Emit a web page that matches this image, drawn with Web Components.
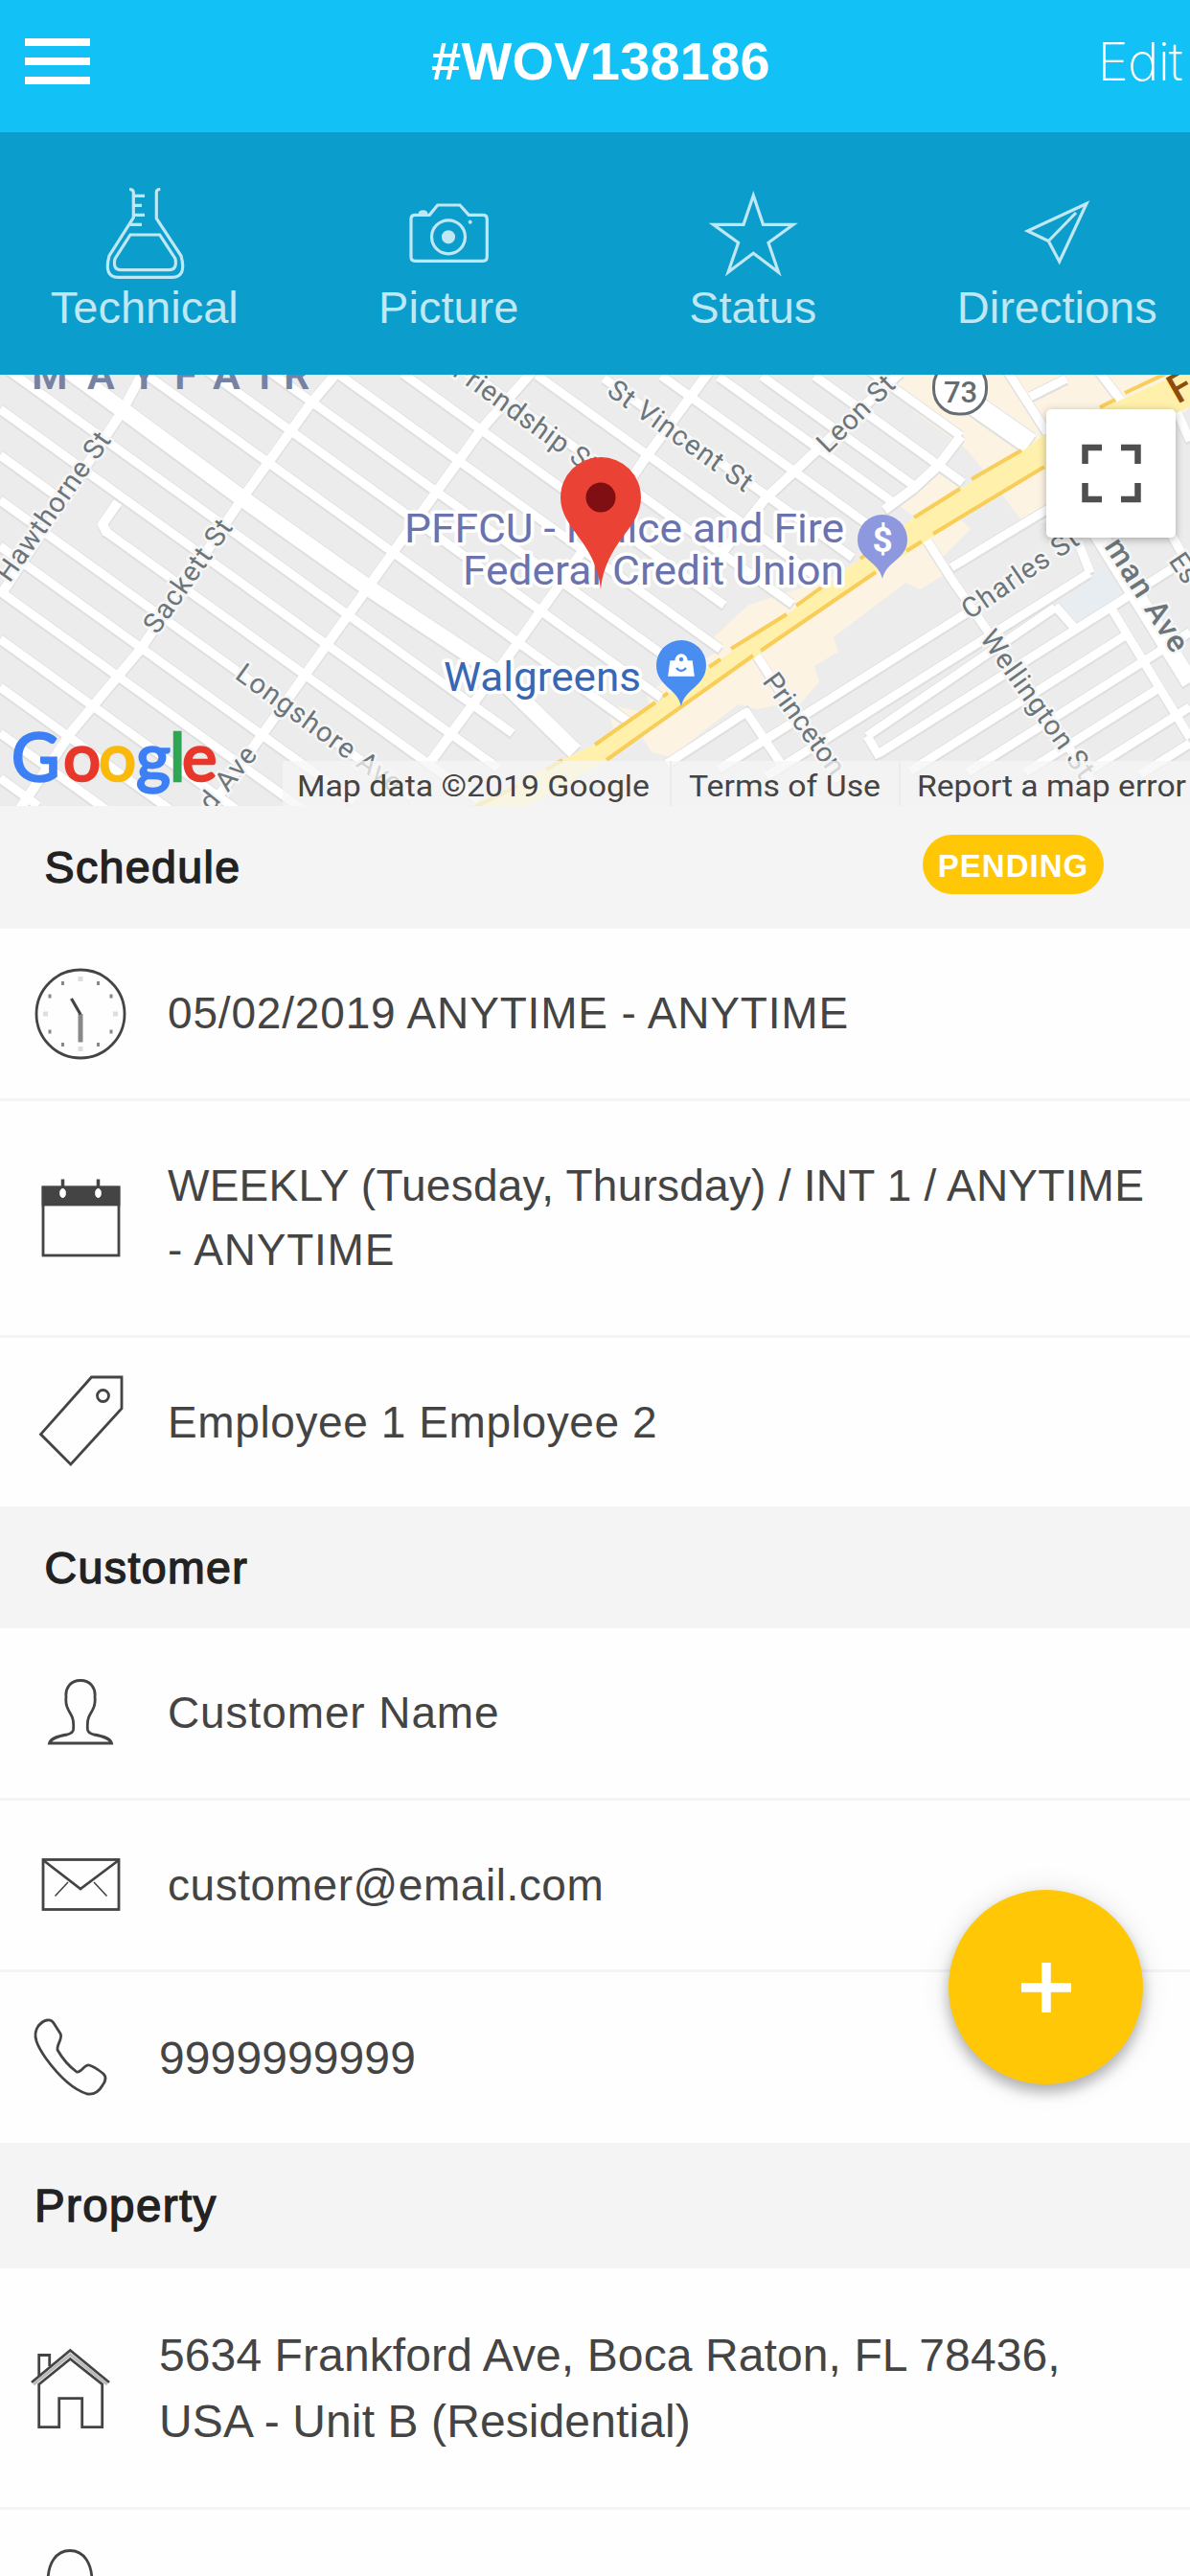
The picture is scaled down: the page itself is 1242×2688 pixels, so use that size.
<!DOCTYPE html>
<html lang="en">
<head>
<meta charset="utf-8">
<title>#WOV138186</title>
<style>
    html,
    body {
        margin: 0;
        padding: 0;
    }

    body {
        width: 1242px;
        height: 2688px;
        overflow: hidden;
        background: #fefefe;
        color: #444;
        font-family: 'Liberation Sans', Arial, sans-serif;
    }
</style>
</head>
<body>
<work-order-page></work-order-page>

<script>
const icons = {
    flask: `
        <path d="M39 7.500q4 0 4.300 3V37L18 77Q12 99 27 99.300H84Q99 99 93 77L67.300 38V10.500q0-3 4-3"/>
        <path d="M40 55H70.700L87 80Q89 91.700 80.700 91.700H30Q21.500 91.500 24 80Z"/>
        <path d="M43.300 14.300H55M43.300 24.300H52M43.300 34.300H55M40 44.300H52"/>`,
    camera: `
        <path d="M20.300 34.300H35.300L43.700 24H67L76.300 34.300H91q4.300 0 4.300 4.300V78q0 4.300-4.300 4.300H20.300Q16 82.300 16 78V38.600q0-4.300 4.300-4.300Z"/>
        <circle cx="55" cy="57.300" r="17.500"/>
        <circle cx="55" cy="57.300" r="5.500" fill="currentColor"/>
        <path d="M24.500 33q0-3 4-3t4 3Z" fill="currentColor" stroke-width="1.500"/>
        <circle cx="77.700" cy="41.700" r="1.600" fill="currentColor" stroke-width="1"/>`,
    star: `
        <path d="M55.300 14L65.500 44.300H97L71 63.300L81.500 94L55.300 74.300L29 94L39.600 63.300L13.500 44.300H45Z"/>`,
    plane: `
        <path d="M86 22.500L24.500 51L46.300 61.500L57.700 83ZM46.300 61.500L75 32"/>`,
    clock: `
        <circle cx="50" cy="50" r="46"/>
        <path d="M50 50V79.500" stroke="#888" stroke-width="5"/>
        <path d="M40.500 34L50 50.500" stroke-width="3.200"/>
        <path d="M50 11v5M50 84v5M11 50h5M84 50h5" stroke="#ddd" stroke-width="5"/>
        <path d="M31.500 16v4M68.500 16v4M31.500 80v4M68.500 80v4M18 29.500v4M82 29.500v4M18 66.500v4M82 66.500v4" stroke="#888" stroke-width="3"/>`,
    calendar: `
        <rect x="11" y="18" width="79" height="71"/>
        <rect x="11" y="18" width="79" height="18" fill="currentColor"/>
        <path d="M31.500 9.500V20M68.500 9.500V20" stroke-width="3.500"/>
        <ellipse cx="31.500" cy="24" rx="2.800" ry="4.500" fill="#fff" stroke="#fff" stroke-width="1"/>
        <ellipse cx="68.500" cy="24" rx="2.800" ry="4.500" fill="#fff" stroke="#fff" stroke-width="1"/>`,
    tag: `
        <path d="M61.500 3H93V35.800L39.800 94L8.500 62.600Z"/>
        <circle cx="73.500" cy="22.500" r="6"/>`,
    person: `
        <path d="M50 15.500C39 15.500 34 24 35 33C34 41 37 46 40 51C43 56 43 62 42.500 67C42 70 40 71 36 72C25 74 19 76 17.500 81H82.500C81 76 75 74 64 72C60 71 58 70 57.500 67C57 62 57 56 60 51C63 46 66 41 65 33C66 24 61 15.500 50 15.500Z"/>`,
    mail: `
        <rect x="11" y="23.500" width="79" height="52"/>
        <path d="M11 24L50 54L90 24"/>
        <path d="M37 47L23.500 61.500M64 47L77.500 61.500" stroke-width="1.600"/>`,
    phone: `
        <path d="M17 17C23 10 30 9 33 14L40 25C43 30 36 36 37 42C42 51 49 59 57 65C62 66 65 57 70 58C75 59 80 63 85 67C89 71 87 75 84 79C80 86 75 89 68 88C52 83 36 66 25 51C16 38 10 27 17 17Z"/>`,
    house: `
        <path d="M10 44L50.300 10.500L91 44"/>
        <path d="M17.700 46L50.300 19.500L83.700 46V90.700H62.700V60.700H38.700V90.700H17.700Z"/>
        <path d="M12 46L50.300 15L89 46" stroke="#bbb" stroke-width="3"/>
        <path d="M17.700 37V15.500H28.700V27"/>`,
    bulb: `
        <path d="M27 40C26 16 36 3.500 50 3.500S74 16 73 40"/>`
}

class LineIcon extends HTMLElement {
    constructor() {
        super()
        this.attachShadow({ mode: 'open' })
    }

    connectedCallback() {
        const size = this.getAttribute('size') || 100
        const weight = this.getAttribute('weight') || 2.8
        this.shadowRoot.innerHTML = /*html*/ `
        <style>
        :host {
            display: block;
            flex: none;
        }

        svg {
            display: block;
            fill: none;
            stroke: currentColor;
        }
        </style>
        <svg width="${size}" height="${size}" viewBox="0 0 ${size} ${size}" stroke-width="${weight}">${icons[this.getAttribute('name')]}</svg>
        `
    }
}

class PageHeader extends HTMLElement {
    constructor() {
        super()
        this.attachShadow({ mode: 'open' })
    }

    connectedCallback() {
        this.shadowRoot.innerHTML = /*html*/ `
        <style>
        :host {
            display: grid;
            grid-template-columns: 1fr auto 1fr;
            align-items: center;
            box-sizing: border-box;
            height: 138px;
            padding: 0 8px 10px 26px;
            background: #12c1f6;
            color: #fff;
        }

        .menu {
            display: grid;
            gap: 12px;
            width: 68px;
        }

        .menu i {
            height: 8px;
            background: #fff;
        }

        h1 {
            margin: 0 6px 0 0;
            font-size: 56px;
            line-height: 64px;
            font-weight: 700;
            letter-spacing: 0.200px;
        }

        .edit {
            justify-self: end;
            font: 200 55px/64px Inter, sans-serif;
            letter-spacing: -0.900px;
        }
        </style>
        <div class="menu"><i></i><i></i><i></i></div>
        <h1><slot></slot></h1>
        <span class="edit">Edit</span>
        `
    }
}

class ToolBar extends HTMLElement {
    constructor() {
        super()
        this.attachShadow({ mode: 'open' })
    }

    connectedCallback() {
        this.shadowRoot.innerHTML = /*html*/ `
        <style>
        :host {
            display: block;
            height: 253px;
            overflow: hidden;
            background: #0b9dcb;
        }

        div {
            display: grid;
            grid-template-columns: repeat(4, 317.500px);
            margin-left: -8px;
            padding-top: 52px;
        }
        </style>
        <div><slot></slot></div>
        `
    }
}

class ToolButton extends HTMLElement {
    constructor() {
        super()
        this.attachShadow({ mode: 'open' })
    }

    connectedCallback() {
        this.shadowRoot.innerHTML = /*html*/ `
        <style>
        :host {
            display: flex;
            flex-direction: column;
            align-items: center;
            color: #bfe7f4;
            font-size: 47px;
            line-height: 52px;
        }

        span {
            margin-top: -5px;
        }
        </style>
        <line-icon name="${this.getAttribute('icon')}" size="110" weight="3.200"></line-icon>
        <span><slot></slot></span>
        `
    }
}

class JobMap extends HTMLElement {
    constructor() {
        super()
        this.attachShadow({ mode: 'open' })
    }

    // streets running down to the right: [offset, from x, to x]
    crossStreets() {
        const slope = 0.72
        const list = [
            [-267, 905, 1003], [-220, 850, 1005], [-180, 795, 954], [-147, 750, 930],
            [-105, 690, 915], [-59, 630, 890], [-12, 560, 850], [35, 490, 827],
            [87, 420, 756], [136, 350, 752], [185, 280, 722], [231, 215, 690],
            [281, 150, 660], [380, 0, 535], [427, 0, 520], [475, 0, 66],
            [475, 109, 500], [522, 0, 430], [570, 0, 370], [617, 0, 320],
            [667, 0, 250], [717, 0, 180], [765, 0, 110], [812, 0, 40]
        ]
        return list
            .map(([c, a, b]) => `M${a} ${a * slope + c}L${b} ${b * slope + c}`)
            .join('')
    }

    // the blocks south of the avenue
    southStreets() {
        const list = [
            [1275, 750, 1012], [1314, 800, 1137], [1364, 917, 1242], [1403, 950, 1177],
            [1442, 1010, 1242], [1480, 1070, 1212], [1520, 1130, 1242], [1558, 1190, 1242]
        ]
        return list
            .map(([c, a, b]) => `M${a} ${c - a * 0.63}L${b} ${c - b * 0.63}`)
            .join('')
    }

    connectedCallback() {
        const roads = `
            <path d="${this.crossStreets()}" stroke-width="9"/>
            <path d="${this.southStreets()}" stroke-width="9"/>
            <path d="M151 385L127 430L0 622M355 385L325 420L253 520L147 677L75 763L20 845M558 385L503 447L384 613L269 773L218 845M742 385L672 480L582 613L539 673L450 794M940 388L799 520L735 600M1003 455L980 485L953 510L923 532M123 524L107 547L112 557" stroke-width="10"/>
            <path d="M967 563L993 604L1140 815M789 683L875 815M696 797L779 743L815 797M993 592L1094 531M1160 635L1242 770M1101 632L1123 657M905 768L1101 634M905 768L918 790M1050 385L1095 455M1145 385L1170 418M1075 414L1113 395M1222 415L1242 460M1212 540L1242 592M1125 565L1138 598" stroke-width="9"/>
            <path d="M60 378L131 430L253 520L384 613L511 697L600 784" stroke-width="17"/>
            <path d="M985 400L1075 463" stroke-width="22"/>
            <path d="M1145 555L1242 712" stroke-width="18"/>`

        this.shadowRoot.innerHTML = /*html*/ `
        <style>
        :host {
            display: block;
            position: relative;
            height: 450px;
            overflow: hidden;
        }

        svg {
            display: block;
        }

        text {
            font-family: Roboto, sans-serif;
        }

        .edge {
            fill: none;
            stroke: #dfdfdf;
        }

        .road {
            fill: none;
            stroke: #fff;
            stroke-linejoin: round;
        }

        .label {
            fill: #6c757a;
            font-size: 29px;
            stroke: #f6f6f6;
            stroke-width: 5px;
            paint-order: stroke;
        }

        .place {
            fill: #6b73ae;
            font-size: 42px;
            stroke: #fff;
            stroke-width: 7px;
            stroke-linejoin: round;
            paint-order: stroke;
        }

        .logo {
            font-family: Lato, sans-serif;
            font-size: 69px;
            stroke-width: 2.600px;
        }

        .halo {
            fill: #fff;
            stroke: #fff;
            stroke-width: 8px;
            stroke-linejoin: round;
        }

        .legal {
            fill: #444;
            font-size: 31px;
        }

        button {
            position: absolute;
            top: 36px;
            right: 15px;
            display: grid;
            place-items: center;
            width: 135px;
            height: 134px;
            padding: 0;
            border: 0;
            border-radius: 5px;
            background: #fff;
            box-shadow: 0 2px 9px rgba(0, 0, 0, 0.3);
        }
        </style>
        <svg width="1242" height="450" viewBox="0 391 1242 450">
            <rect y="391" width="1242" height="450" fill="#ececec"/>
            <g fill="#fcf3e3">
                <path d="M930 391H1242V425L1095 545H1068L1010 470L955 430Z"/>
                <path d="M980 492L1003 510L955 540L935 525Z"/>
                <path d="M995 535L1013 552L980 585L985 600L960 615L945 608L870 665L875 680L850 695L855 712L830 740L815 735L790 740L770 735L700 790L680 785L668 765L790 672L965 562Z"/>
                <path d="M800 625L780 632L745 665L750 680L700 705L675 725L680 745L633 735L640 760L800 660L880 600Z"/>
            </g>
            <path d="M1146 591L1180 622L1123 655L1105 632Z" fill="#e7edf0"/>
            <g class="edge" transform="translate(0 2.500)">${roads}</g>
            <g class="edge" transform="translate(0 -1)">${roads}</g>
            <g class="road">${roads}</g>

            <path d="M485 844L586 793L621 777L823 640L954 540L1068 470L1092 452L1242 385V425L1088 488L914 598L791 684L633 794L545 844Z" fill="#fff1ab"/>
            <g fill="none" stroke="#f8cd58" stroke-width="4">
                <path d="M570 803L587 793M621 777L684 733M692 727L697 723M740 696L752 688M763 677L821 641M831 632L860 611M898 583L902 580M954 540L1002 510M1014 500L1066 470M1148 425L1164 417M1174 410L1242 378"/>
                <path d="M490 845L540 820M633 793L786 684M794 679L914 597M946 575L962 565M974 557L1090 487"/>
            </g>

            <text y="406" font-size="43" font-weight="600" fill="#7582a4"><tspan x="33">M</tspan><tspan x="91">A</tspan><tspan x="137">Y</tspan><tspan x="182">F</tspan><tspan x="222">A</tspan><tspan x="270">I</tspan><tspan x="296">R</tspan></text>
            <text class="label" transform="translate(10 609) rotate(-54.500)" textLength="184">Hawthorne St</text>
            <text class="label" transform="translate(164 663) rotate(-54.700)" textLength="138">Sackett St</text>
            <text class="label" transform="translate(244 707) rotate(36)" textLength="206">Longshore Ave</text>
            <text class="label" transform="translate(221 848) rotate(-51)" textLength="77">d Ave</text>
            <text class="label" transform="translate(471 391) rotate(36)" textLength="178">Friendship St</text>
            <text class="label" transform="translate(632 411) rotate(35.500)" textLength="178">St Vincent St</text>
            <text class="label" transform="translate(864 474) rotate(-44.600)" textLength="101">Leon St</text>
            <text class="label" transform="translate(1012 647) rotate(-34.500)" textLength="141">Charles St</text>
            <text class="label" transform="translate(1022 666) rotate(54.500)" textLength="182">Wellington St</text>
            <text class="label" transform="translate(795 711) rotate(54)" textLength="124">Princeton</text>
            <text class="label" transform="translate(1152 570) rotate(57.500)" textLength="134" font-weight="500" style="font-size: 32px">man Ave</text>
            <text class="label" transform="translate(1219 585) rotate(56)">Es</text>
            <text transform="translate(1229 422) rotate(-30)" font-size="42" font-weight="500" fill="#8f4d0c">F</text>

            <rect x="974.500" y="377" width="55" height="55" rx="26" fill="#fff" stroke="#646d72" stroke-width="3"/>
            <text x="985" y="420" font-size="31" font-weight="500" textLength="35" fill="#646d72">73</text>

            <text class="place" x="422" y="566" textLength="459" lengthAdjust="spacingAndGlyphs">PFFCU - Police and Fire</text>
            <text class="place" x="483" y="610" textLength="398" lengthAdjust="spacingAndGlyphs">Federal Credit Union</text>
            <text class="place" x="463" y="721" textLength="206" lengthAdjust="spacingAndGlyphs" style="fill: #3767b5">Walgreens</text>

            <path d="M921 604C917 585 895 584 895 563A26 26 0 0 1 947 563C947 584 925 585 921 604Z" fill="#8e98df"/>
            <text x="921" y="576" text-anchor="middle" font-size="37" font-weight="700" fill="#fff">$</text>
            <path d="M711 737C707 718 685 716 685 694A26 26 0 0 1 737 694C737 716 715 718 711 737Z" fill="#4a8df0"/>
            <path d="M700 690H722L724 705H698ZM705 690A6 7 0 0 1 717 690" fill="#fff" stroke="#fff" stroke-width="1.500"/>
            <path d="M706 697Q711 703 716 697" fill="none" stroke="#4a8df0" stroke-width="2.500"/>
            <circle cx="711" cy="688" r="2.200" fill="#4a8df0"/>
            <path d="M627 615C622 565 585 552 585 519A42 42 0 0 1 669 519C669 552 632 565 627 615Z" fill="#ea4335"/>
            <circle cx="627" cy="519" r="15.500" fill="#7f0f12"/>

            <rect x="295" y="794" width="947" height="47" fill="#f5f5f5" fill-opacity="0.750"/>
            <path d="M700 794V841M939 794V841" stroke="#ececec" stroke-width="2"/>
            <text class="legal" x="310" y="831" textLength="368" lengthAdjust="spacingAndGlyphs">Map data ©2019 Google</text>
            <text class="legal" x="719" y="831" textLength="200" lengthAdjust="spacingAndGlyphs">Terms of Use</text>
            <text class="legal" x="957" y="831" textLength="281" lengthAdjust="spacingAndGlyphs">Report a map error</text>
            <text class="logo" y="815"><tspan x="12" fill="#3d7ff5" stroke="#3d7ff5">G</tspan><tspan x="66" fill="#e8372b" stroke="#e8372b">o</tspan><tspan x="103" fill="#fbb90a" stroke="#fbb90a">o</tspan><tspan x="142" fill="#3d7ff5" stroke="#3d7ff5">g</tspan><tspan x="177" fill="#2fa653" stroke="#2fa653">l</tspan><tspan x="190" fill="#e8372b" stroke="#e8372b">e</tspan></text>
        </svg>
        <button aria-label="Fullscreen">
            <svg width="62" height="62" viewBox="0 0 62 62" fill="none" stroke="#4f4f4f" stroke-width="6.500">
                <path d="M3.500 21V4H21M41 4H58.500V21M58.500 41V58H41M21 58H3.500V41"/>
            </svg>
        </button>
        `
    }
}

class SectionTitle extends HTMLElement {
    constructor() {
        super()
        this.attachShadow({ mode: 'open' })
    }

    connectedCallback() {
        this.shadowRoot.innerHTML = /*html*/ `
        <style>
        :host {
            display: flex;
            align-items: center;
            justify-content: space-between;
            box-sizing: border-box;
            height: var(--title-height, 128px);
            padding: 0 90px 0 var(--title-inset, 46.500px);
            background: #f4f4f4;
            color: #222;
        }

        h2 {
            margin: 0;
            font-size: var(--title-size, 46.500px);
            line-height: 52px;
            font-weight: 400;
            letter-spacing: 1.400px;
            -webkit-text-stroke: 1.400px currentColor;
        }
        </style>
        <h2><slot></slot></h2>
        <slot name="badge"></slot>
        `
    }
}

class StatusBadge extends HTMLElement {
    constructor() {
        super()
        this.attachShadow({ mode: 'open' })
    }

    connectedCallback() {
        this.shadowRoot.innerHTML = /*html*/ `
        <style>
        :host {
            display: flex;
            align-items: center;
            justify-content: center;
            box-sizing: border-box;
            width: 189px;
            height: 62px;
            margin-bottom: 6px;
            padding-top: 3px;
            border-radius: 31px;
            background: #ffc706;
            color: #fff;
            font-size: 33px;
            font-weight: 700;
            letter-spacing: 1px;
        }
        </style>
        <slot></slot>
        `
    }
}

class InfoRow extends HTMLElement {
    constructor() {
        super()
        this.attachShadow({ mode: 'open' })
    }

    connectedCallback() {
        this.shadowRoot.innerHTML = /*html*/ `
        <style>
        :host {
            display: flex;
            align-items: center;
            gap: var(--row-gap, 41.500px);
            box-sizing: border-box;
            height: var(--row-height, 178px);
            padding-left: var(--row-inset, 33.500px);
            border-bottom: var(--row-line, 3px) solid #f4f4f4;
            font-size: var(--row-size, 46px);
            line-height: var(--row-leading, 67px);
            letter-spacing: var(--row-tracking, 0.700px);
        }

        p {
            margin: 0;
            white-space: nowrap;
        }
        </style>
        <line-icon name="${this.getAttribute('icon')}"></line-icon>
        <p><slot></slot></p>
        `
    }
}

class AddButton extends HTMLElement {
    constructor() {
        super()
        this.attachShadow({ mode: 'open' })
    }

    connectedCallback() {
        this.shadowRoot.innerHTML = /*html*/ `
        <style>
        :host {
            position: fixed;
            left: 990px;
            top: 1972px;
            display: grid;
            place-items: center;
            width: 203px;
            height: 203px;
            border-radius: 50%;
            background: #ffc706;
            box-shadow: 0 8px 14px rgba(0, 0, 0, 0.26), 0 2px 30px rgba(0, 0, 0, 0.12);
        }
        </style>
        <svg width="52" height="52" viewBox="0 0 52 52" stroke="#fff" stroke-width="9.500"><path d="M0 26H52M26 0V52"/></svg>
        `
    }
}

class WorkOrderPage extends HTMLElement {
    constructor() {
        super()
        this.attachShadow({ mode: 'open' })
    }

    connectedCallback() {
        this.shadowRoot.innerHTML = /*html*/ `
        <style>
        :host {
            display: block;
        }

        .wide {
            --row-height: 247px;
            --row-tracking: 0.230px;
        }

        .wide span {
            letter-spacing: 0.800px;
        }

        .last {
            --row-line: 0px;
        }

        .shifted {
            --row-inset: 23px;
            --row-gap: 43px;
            --row-size: 48px;
            --row-tracking: 0.100px;
            --title-inset: 36px;
            --title-size: 47.500px;
        }
        </style>
        <page-header>#WOV138186</page-header>
        <tool-bar>
            <tool-button icon="flask">Technical</tool-button>
            <tool-button icon="camera">Picture</tool-button>
            <tool-button icon="star">Status</tool-button>
            <tool-button icon="plane">Directions</tool-button>
        </tool-bar>
        <job-map></job-map>

        <section-title>Schedule<status-badge slot="badge">PENDING</status-badge></section-title>
        <info-row icon="clock" style="--row-height: 180px; --row-tracking: 0.830px">05/02/2019 ANYTIME - ANYTIME</info-row>
        <info-row class="wide" icon="calendar">WEEKLY (Tuesday, Thursday) / INT 1 / ANYTIME<br><span>- ANYTIME</span></info-row>
        <info-row class="last" icon="tag" style="--row-height: 176px; --row-tracking: 0.600px">Employee 1 Employee 2</info-row>

        <section-title style="--title-height: 127px">Customer</section-title>
        <info-row icon="person" style="--row-height: 180px; --row-tracking: 0.900px">Customer Name</info-row>
        <info-row icon="mail" style="--row-height: 179px; --row-tracking: 0.550px">customer@email.com</info-row>
        <info-row class="shifted last" icon="phone">9999999999</info-row>

        <section-title class="shifted" style="--title-height: 131px">Property</section-title>
        <info-row class="shifted" icon="house" style="--row-height: 252px; --row-leading: 69px">5634 Frankford Ave, Boca Raton, FL 78436,<br>USA - Unit B (Residential)</info-row>
        <info-row class="shifted last" icon="bulb"></info-row>
        <add-button></add-button>
        `
    }
}

customElements.define('line-icon', LineIcon)
customElements.define('page-header', PageHeader)
customElements.define('tool-bar', ToolBar)
customElements.define('tool-button', ToolButton)
customElements.define('job-map', JobMap)
customElements.define('section-title', SectionTitle)
customElements.define('status-badge', StatusBadge)
customElements.define('info-row', InfoRow)
customElements.define('add-button', AddButton)
customElements.define('work-order-page', WorkOrderPage)
</script>
</body>
</html>
